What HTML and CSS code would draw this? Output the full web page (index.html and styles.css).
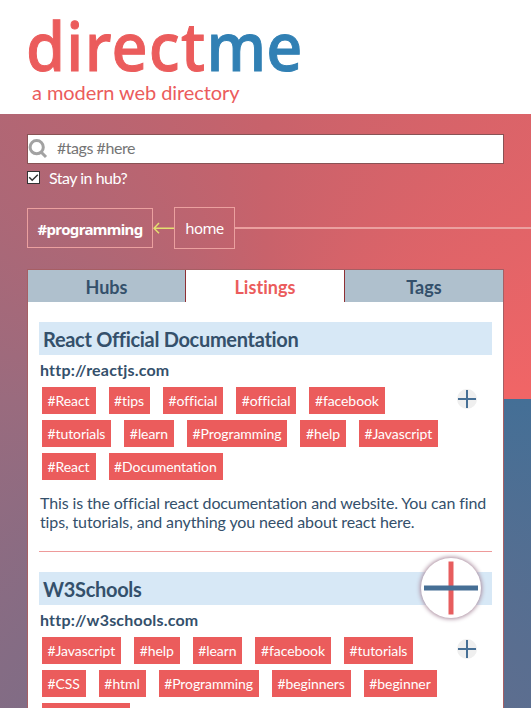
FILE: index.html
```html
<!DOCTYPE html>
<html lang="en">
<head>
<meta charset="utf-8">
<title>directme</title>
<link rel="stylesheet" href="styles.css">
</head>
<body>
<header class="header">
  <h1 class="logo"><span class="logo-a">direct</span><span class="logo-b">me</span></h1>
  <p class="tagline">a modern web directory</p>
</header>
<main class="main">
  <label class="search">
    <svg class="search-icon" viewBox="0 0 20 20"><circle cx="8.7" cy="8.2" r="6.6"/><path d="M13 13l5 5"/></svg>
    <span class="search-text">#tags #here</span>
  </label>
  <div class="stay">
    <svg class="check" viewBox="0 0 13 13"><rect x=".5" y=".5" width="12" height="12"/><path d="M2.2 6.2l3 3 5.6-5.4"/></svg>
    <span class="stay-text">Stay in hub?</span>
  </div>
  <nav class="crumbs">
    <div class="crumb current"><span class="crumb-text">#programming</span></div>
    <svg class="arrow" viewBox="0 0 21 12"><path d="M1 6.2h20M6 1L1 6.2l5 5"/></svg>
    <div class="crumb home"><span class="crumb-text">home</span></div>
    <div class="line"></div>
  </nav>
  <section class="panel">
    <div class="tabs">
      <div class="tab"><span>Hubs</span></div>
      <div class="tab active"><span>Listings</span></div>
      <div class="tab"><span>Tags</span></div>
    </div>
    <article class="listing">
      <h2 class="title">React Official Documentation</h2>
      <div class="url">http://reactjs.com</div>
      <div class="row">
        <div class="tags">
          <span class="tag">#React</span><span class="tag">#tips</span><span class="tag">#official</span><span class="tag">#official</span><span class="tag">#facebook</span><span class="tag">#tutorials</span><span class="tag">#learn</span><span class="tag">#Programming</span><span class="tag">#help</span><span class="tag">#Javascript</span><span class="tag">#React</span><span class="tag">#Documentation</span>
        </div>
        <svg class="add" viewBox="0 0 20 20"><circle cx="10" cy="10" r="10"/><path d="M1 10h18M10 1v18"/></svg>
      </div>
      <p class="desc">This is the official react documentation and website. You can find tips, tutorials, and anything you need about react here.</p>
    </article>
    <article class="listing">
      <h2 class="title">W3Schools</h2>
      <div class="url">http://w3schools.com</div>
      <div class="row">
        <div class="tags">
          <span class="tag">#Javascript</span><span class="tag">#help</span><span class="tag">#learn</span><span class="tag">#facebook</span><span class="tag">#tutorials</span><span class="tag">#CSS</span><span class="tag">#html</span><span class="tag">#Programming</span><span class="tag">#beginners</span><span class="tag">#beginner</span><span class="tag blank"></span>
        </div>
        <svg class="add" viewBox="0 0 20 20"><circle cx="10" cy="10" r="10"/><path d="M1 10h18M10 1v18"/></svg>
      </div>
    </article>
  </section>
</main>
<div class="fab"><svg viewBox="0 0 60 60"><path class="v" d="M30 3.5v53"/><path class="h" d="M3 30h54"/></svg></div>
</body>
</html>
```

FILE: styles.css
```css
* { box-sizing: border-box; }
html, body { height: 708px; overflow: hidden; }
body { margin: 0; font-family: Lato, sans-serif; color: #34506b; }
h1, h2, p { margin: 0; }
.header { height: 114px; background: #fff; padding: 10px 0 0 26px; }
.logo { font: 500 67px/70px "Noto Sans", sans-serif; white-space: nowrap; width: max-content; transform: scaleX(.94); transform-origin: 0 0; -webkit-text-stroke: 1px currentColor; }
.logo-a { color: #eb5c5c; letter-spacing: 1.4px; }
.logo-b { color: #3180b4; }
.tagline { font-size: 20px; line-height: 24px; color: #eb5c5c; padding-left: 6px; letter-spacing: -.08px; }
.main { height: 594px; padding: 20px 27px 0; overflow: hidden; background: conic-gradient(from 90deg at 265px 285px, #446f96, #9a6b7e 50%, #c8626b 75%, #f16566); }
.search { display: flex; align-items: center; height: 30px; width: 477px; background: #fff; border: 1px solid #885355; }
.search-icon { width: 20px; height: 20px; margin-right: 9px; fill: none; stroke: #a2a2a2; stroke-width: 3; }
.search-text { font-size: 16px; line-height: 20px; margin-top: -2px; color: #757575; letter-spacing: -.45px; }
.stay { display: flex; height: 27px; align-items: center; color: #fff; font-size: 16px; letter-spacing: -.5px; }
.check { width: 13px; height: 13px; margin-right: 9px; fill: #fff; stroke: #333; stroke-width: 1; }
.check path { fill: none; stroke-width: 1.5; }
.crumbs { display: flex; height: 42px; align-items: center; margin: 16px -27px 0 0; color: #fff; }
.crumb { display: flex; align-items: center; justify-content: center; border: 1px solid #eba09f; flex: none; }
.current { width: 126px; height: 40px; font: 700 15px "Noto Sans", sans-serif; letter-spacing: -.65px; padding-top: 2px; }
.home { width: 61px; height: 42px; font: 15px "Noto Sans", sans-serif; letter-spacing: -.6px; }
.arrow { width: 21px; height: 12px; fill: none; stroke: #e4e070; stroke-width: 1.5; flex: none; }
.line { flex: 1; height: 2px; background: #eba09f; }
.panel { margin-top: 20px; width: 477px; height: 460px; background: #fff; border: 1px solid #a65f64; }
.tabs { display: grid; grid-template-columns: 157px 160px 158px; height: 32px; font-size: 18px; font-weight: 700; letter-spacing: .05px; }
.tab { display: flex; align-items: center; justify-content: center; background: #afc0cd; padding-top: 2px; }
.active { background: #fff; color: #eb5c5c; border: solid #8f3034; border-width: 0 1px; }
.listing { margin: 20px 11px 0; }
.listing + .listing { border-top: 1px solid #ee9a9a; padding-top: 20px; margin-top: 20px; }
.title { height: 33px; background: #d7e8f6; padding-left: 4px; font-size: 20px; line-height: 34px; letter-spacing: -.3px; }
.url { font-size: 16px; font-weight: 700; line-height: 30px; height: 32px; padding-left: 1px; letter-spacing: .2px; }
.row { display: flex; justify-content: space-between; }
.tags { display: flex; flex-wrap: wrap; gap: 6px 13px; width: 405px; padding-left: 3px; }
.tag { height: 27px; line-height: 28px; padding: 0 6px 0 5.5px; background: #eb5c5c; color: #fff; font-size: 14px; letter-spacing: -.08px; }
.blank { width: 88px; }
.add { width: 20px; height: 20px; margin: 2px 15px 0 0; fill: #efefef; stroke: #466f95; stroke-width: 2; flex: none; }
.add circle { stroke: none; }
.desc { margin-top: 13px; padding-left: 1px; font-size: 16px; line-height: 19px; letter-spacing: -.12px; }
.fab { position: absolute; left: 421px; top: 558px; width: 60px; height: 60px; border-radius: 50%; background: #fff; box-shadow: 0 0 4px 1px #a98b9d; }
.fab svg { display: block; }
.v { stroke: #e75d5e; stroke-width: 5; }
.h { stroke: #466f95; stroke-width: 5; }
```
